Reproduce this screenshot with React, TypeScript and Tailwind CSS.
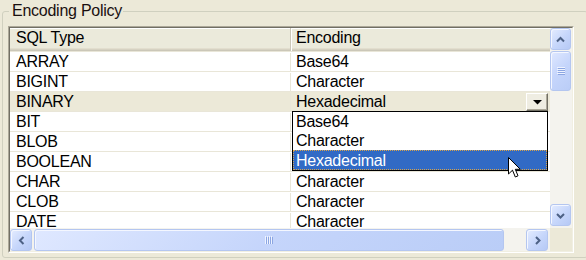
import React from "react";

const ROWS = [
  { type: "ARRAY", enc: "Base64" },
  { type: "BIGINT", enc: "Character" },
  { type: "BINARY", enc: "Hexadecimal", editing: true },
  // encodings of the next three rows sit under the open list
  { type: "BIT", enc: "" },
  { type: "BLOB", enc: "" },
  { type: "BOOLEAN", enc: "" },
  { type: "CHAR", enc: "Character" },
  { type: "CLOB", enc: "Character" },
  { type: "DATE", enc: "Character" },
];

const OPTIONS = ["Base64", "Character", "Hexadecimal"];

const ARROWS: Record<string, string> = {
  up: "1,6.5 4.5,3 8,6.5",
  down: "1,3 4.5,6.5 8,3",
  left: "6.5,1 3,4.5 6.5,8",
  right: "3,1 6.5,4.5 3,8",
};

function ScrollButton({ dir, className = "" }: { dir: string; className?: string }) {
  return (
    <div
      className={
        "flex items-center justify-center rounded-[3px] border border-[#b4c6f0] bg-[linear-gradient(135deg,#e4ecff,#c6d6fb_55%,#b6c9f5)] shadow-[inset_1px_1px_0_#f4f7ff] " +
        className
      }
    >
      <svg width="9" height="9" viewBox="0 0 9 9">
        <polyline points={ARROWS[dir]} fill="none" stroke="#4d6185" strokeWidth="2" />
      </svg>
    </div>
  );
}

function Grip({ vertical }: { vertical?: boolean }) {
  const lines = [0, 2, 4, 6];
  return (
    <svg width="8" height="8" viewBox="0 0 8 8">
      {lines.map((p) =>
        vertical ? (
          <g key={p}>
            <line x1="0" y1={p + 0.5} x2="8" y2={p + 0.5} stroke="#eef3ff" />
            <line x1="1" y1={p + 1.5} x2="8" y2={p + 1.5} stroke="#8ca6e2" />
          </g>
        ) : (
          <g key={p}>
            <line x1={p + 0.5} y1="0" x2={p + 0.5} y2="8" stroke="#eef3ff" />
            <line x1={p + 1.5} y1="1" x2={p + 1.5} y2="8" stroke="#8ca6e2" />
          </g>
        )
      )}
    </svg>
  );
}

const thumb =
  "flex items-center justify-center rounded-[3px] border border-[#b4c6f0] bg-[linear-gradient(135deg,#dfe8ff,#c5d5fb_50%,#bacdf7)] shadow-[inset_1px_1px_0_#f4f7ff]";

export default function App() {
  return (
    <div className="relative h-[260px] w-[586px] overflow-hidden bg-[#ece9d8] pl-[2px] pt-[2px] font-['Liberation_Sans',Arial,sans-serif] text-[16px] tracking-[-0.25px] text-black">
      <fieldset className="h-[256px] w-[586px] rounded-[3px] border border-[#d0d0bf]">
        <legend className="ml-[6px] pl-[3px] pr-[1px] leading-[18px] text-[#1a1010]">Encoding Policy</legend>

        <div className="ml-[5px] mt-[6px] h-[227px] w-[566px] border border-t-[#aca899] border-l-[#aca899] border-r-white border-b-white">
          <div className="flex h-full flex-col border border-t-[#716f64] border-l-[#716f64] border-r-[#f1efe2] border-b-[#f1efe2] bg-white">
            <div className="flex h-[200px]">
              {/* table */}
              <div className="w-[540px] overflow-hidden">
                <div className="flex h-[23px] bg-[#ebeadb] leading-[20px] shadow-[inset_0_-1px_0_#cbc7b8,inset_0_-2px_0_#d6d2c2,inset_0_-3px_0_#e2dece,inset_0_1px_0_#fff]">
                  <div className="w-[281px] border-r border-[#cbc7b8] pl-[6px]">SQL Type</div>
                  <div className="flex-1 border-l border-white pl-[4px]">Encoding</div>
                </div>
                {ROWS.map((r) => (
                  <div
                    key={r.type}
                    className={
                      "flex h-[20px] border-t border-[#e9e6d8] pt-[1px] leading-[18px] " + (r.editing ? "bg-[#ece9d8]" : "")
                    }
                  >
                    <div className="w-[281px] border-r border-[#e9e6d8] pl-[6px]">{r.type}</div>
                    {r.editing ? (
                      <div className="relative -mt-[1px] flex w-[259px] items-end justify-between">
                        <span className="pb-[0px] pl-[5px] leading-[19px]">{r.enc}</span>
                        <div className="mr-[2px] flex h-[18px] w-[22px] items-center justify-center border border-t-white border-l-white border-r-[#716f64] border-b-[#716f64] bg-[#efede2] shadow-[inset_-1px_-1px_0_#aca899]">
                          <svg width="9" height="5" viewBox="0 0 9 5">
                            <polygon points="0,0 9,0 4.5,4.5" fill="#000" />
                          </svg>
                        </div>
                        <div className="absolute left-[1px] top-full z-10 w-[256px] border border-black bg-white">
                          {OPTIONS.map((o) =>
                            o === r.enc ? (
                              <div
                                key={o}
                                className="h-[20px] border border-dotted border-[#d9a34a] bg-[#316ac5] pl-[2px] leading-[19px] text-white"
                              >
                                {o}
                              </div>
                            ) : (
                              <div key={o} className="h-[19px] pl-[3px] leading-[20px]">
                                {o}
                              </div>
                            )
                          )}
                        </div>
                      </div>
                    ) : (
                      <div className="flex-1 pl-[5px]">{r.enc}</div>
                    )}
                  </div>
                ))}
              </div>

              {/* vertical scrollbar */}
              <div className="flex w-[22px] flex-col bg-[#f4f3ee] pr-[1px]">
                <ScrollButton dir="up" className="h-[22px]" />
                <div className="flex-1 pt-[1px]">
                  <div className={thumb + " h-[40px]"}>
                    <Grip vertical />
                  </div>
                </div>
                <ScrollButton dir="down" className="mb-[2px] h-[22px]" />
              </div>
            </div>

            {/* horizontal scrollbar */}
            <div className="flex h-[23px]">
              <div className="flex w-[540px] items-end bg-[#f4f3ee]">
                <ScrollButton dir="left" className="h-[22px] w-[22px]" />
                <div className={thumb + " ml-[2px] h-[22px] w-[470px]"}>
                  <Grip />
                </div>
                <div className="flex-1" />
                <ScrollButton dir="right" className="mr-[2px] h-[22px] w-[22px]" />
              </div>
              <div className="w-[22px] bg-[#ece9d8]" />
            </div>
          </div>
        </div>
      </fieldset>

      {/* mouse pointer */}
      <svg className="absolute left-[508px] top-[157px] z-20" width="13" height="22" viewBox="0 0 13 22">
        <path d="M0.5 0.5 L0.5 17 L4.5 13.2 L7.3 20 L10 18.8 L7.3 12.3 L12.3 12.3 Z" fill="#fff" stroke="#000" strokeWidth="1" />
      </svg>
    </div>
  );
}
